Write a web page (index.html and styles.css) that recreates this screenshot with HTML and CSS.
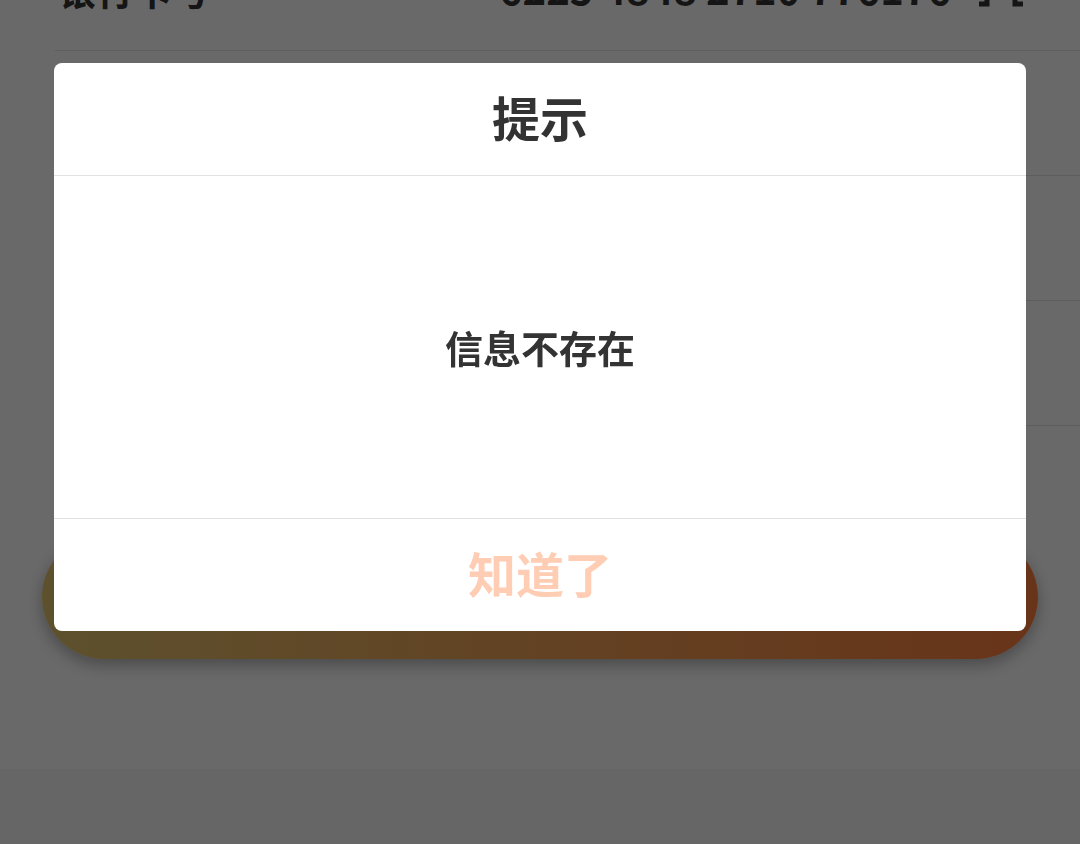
FILE: index.html
```html
<!DOCTYPE html>
<html lang="zh-CN">
<head>
<meta charset="utf-8">
<title>提示</title>
<link rel="stylesheet" href="styles.css">
</head>
<body>
<div class="page">
  <div class="list">
    <div class="row">
      <span class="label">银行卡号</span>
      <span class="value">6225 4848 2710 776176</span>
      <svg class="copy" width="48" height="40" viewBox="0 0 48 40"><path d="M10 0 V36 H2 M38 0 V36 H46" fill="none" stroke="#333" stroke-width="5"/></svg>
    </div>
    <div class="row"></div>
    <div class="row"></div>
    <div class="row"></div>
  </div>
  <div class="btn-wrap"><div class="submit"></div></div>
  <div class="footer"></div>
</div>
<div class="mask"></div>
<div class="dialog">
  <div class="d-title">提示</div>
  <div class="d-body">信息不存在</div>
  <div class="d-foot">知道了</div>
</div>
</body>
</html>
```
FILE: styles.css
```css
html, body {
  margin: 0;
  padding: 0;
  width: 1080px;
  height: 844px;
  overflow: hidden;
  font-family: "Noto Sans CJK SC", "Noto Sans", sans-serif;
  background: #f7f7f7;
}
.page {
  margin-top: -74px;
  background: #fff;
}
.list {
  padding-left: 55px;
}
.row {
  height: 124px;
  border-bottom: 1px solid #e3e3e3;
  display: flex;
  align-items: center;
  padding-right: 55px;
  color: #333;
  font-weight: 700;
}
.label {
  padding-left: 3px;
  font-size: 38px;
  flex: 1;
}
.value {
  font-size: 40px;
}
.copy {
  margin-left: 26px;
}
.btn-wrap {
  padding: 109px 42px 110px;
}
.submit {
  height: 124px;
  border-radius: 62px;
  background: linear-gradient(90deg, #e3c46f, #fd7f3e);
  box-shadow: 0 6px 16px rgba(0,0,0,0.3);
}
.footer {
  height: 74px;
  background: #f7f7f7;
}
.mask {
  position: fixed;
  inset: 0;
  background: rgba(0,0,0,0.59);
}
.dialog {
  position: fixed;
  left: 54px;
  top: 63px;
  width: 972px;
  background: #fff;
  border-radius: 8px;
  overflow: hidden;
  display: flex;
  flex-direction: column;
}
.d-title {
  height: 113px;
  box-sizing: border-box;
  padding-bottom: 6px;
  display: flex;
  align-items: center;
  justify-content: center;
  font-size: 48px;
  font-weight: 700;
  color: #333;
  border-bottom: 1px solid #e2e2e2;
}
.d-body {
  height: 343px;
  box-sizing: border-box;
  padding-bottom: 2px;
  display: flex;
  align-items: center;
  justify-content: center;
  font-size: 38px;
  font-weight: 700;
  color: #333;
  border-bottom: 1px solid #e2e2e2;
}
.d-foot {
  height: 112px;
  box-sizing: border-box;
  padding-bottom: 6px;
  display: flex;
  align-items: center;
  justify-content: center;
  font-size: 48px;
  font-weight: 700;
  color: #ffcdb4;
}
```
